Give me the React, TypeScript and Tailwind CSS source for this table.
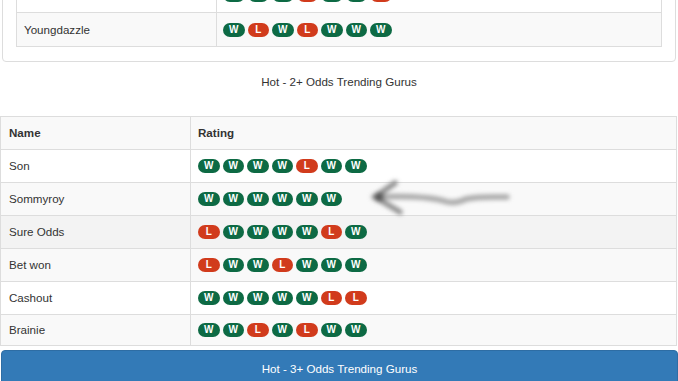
import React from 'react';

type Result = 'W' | 'L';

const font = { fontFamily: '"Liberation Sans", Arial, sans-serif' };

function Badge({ r }: { r: Result }) {
    return (
        <span
            className={`inline-flex items-center justify-center w-[21.5px] h-[14px] rounded-full text-white text-[10px] font-bold leading-none ${r === 'W' ? 'bg-[#0d6a44]' : 'bg-[#d13b1c]'}`}
        >
            {r}
        </span>
    );
}

function Badges({ s }: { s: string }) {
    return (
        <div className="flex items-center gap-[3px]">
            {s.split('').map((c, i) => (
                <Badge key={i} r={c as Result} />
            ))}
        </div>
    );
}

const gurus: { name: string; rating: string; h: string; bg: string }[] = [
    { name: 'Son', rating: 'WWWWLWW', h: 'h-[33px]', bg: 'bg-white' },
    { name: 'Sommyroy', rating: 'WWWWWW', h: 'h-[33px]', bg: 'bg-[#f9f9f9]' },
    { name: 'Sure Odds', rating: 'LWWWWLW', h: 'h-[33px]', bg: 'bg-[#f3f3f3]' },
    { name: 'Bet won', rating: 'LWWLWWW', h: 'h-[33px]', bg: 'bg-[#f9f9f9]' },
    { name: 'Cashout', rating: 'WWWWWLL', h: 'h-[33px]', bg: 'bg-white' },
    { name: 'Brainie', rating: 'WWLWLWW', h: 'h-[31px]', bg: 'bg-[#f9f9f9]' },
];

function Arrow() {
    return (
        <svg className="absolute left-[360px] top-[170px]" width="160" height="50" viewBox="0 0 160 50">
            <defs>
                <filter id="smudge" x="-10%" y="-30%" width="120%" height="160%">
                    <feGaussianBlur stdDeviation="2" />
                </filter>
            </defs>
            <g filter="url(#smudge)" fill="none" strokeLinecap="round" strokeLinejoin="round">
                <path d="M14 27 C 40 26, 70 27, 84 31 C 92 34, 98 33, 106 29 C 118 26, 135 27, 147 27" stroke="#a8a8a8" strokeWidth="5.5" />
                <path d="M35 13 L 15 27 L 40 42" stroke="#8f8f8f" strokeWidth="5.5" />
                <circle cx="19" cy="27" r="5" fill="#5a5a5a" />
            </g>
        </svg>
    );
}

export default function App() {
    return (
        <div className="relative w-[678px] h-[381px] overflow-hidden bg-white text-[#333] text-[11.6px]" style={font}>
            {/* top panel, scrolled so only its last rows show */}
            <div className="mx-[2px] -mt-[24px] border border-[#ddd] rounded-b-[4px] px-[13px] pb-[14px]">
                <div className="border border-[#ddd]">
                    <div className="flex h-[34px] bg-white">
                        <div className="w-[200px] border-r border-[#ddd] pl-[7px] flex items-center">Emmanuelson</div>
                        <div className="flex-1 pl-[6px] flex items-center">
                            <Badges s="WWWLWWL" />
                        </div>
                    </div>
                    <div className="flex h-[34px] bg-[#f9f9f9] border-t border-[#ddd]">
                        <div className="w-[200px] border-r border-[#ddd] pl-[7px] flex items-center">Youngdazzle</div>
                        <div className="flex-1 pl-[6px] flex items-center">
                            <Badges s="WLWLWWW" />
                        </div>
                    </div>
                </div>
            </div>

            <div className="h-[54px] pt-[12px] text-center leading-[16px]">Hot - 2+ Odds Trending Gurus</div>

            <div className="w-[677px] border border-[#ddd]">
                <div className="flex h-[32px] bg-[#f9f9f9] font-bold">
                    <div className="w-[190px] border-r border-[#ddd] pl-[8px] flex items-center">Name</div>
                    <div className="flex-1 pl-[7px] flex items-center">Rating</div>
                </div>
                {gurus.map((g) => (
                    <div key={g.name} className={`flex border-t border-[#ddd] ${g.h} ${g.bg}`}>
                        <div className="w-[190px] border-r border-[#ddd] pl-[8px] flex items-center">{g.name}</div>
                        <div className="flex-1 pl-[7px] flex items-center">
                            <Badges s={g.rating} />
                        </div>
                    </div>
                ))}
            </div>

            <div className="mt-[4px] ml-[1px] h-[36px] rounded-t-[4px] bg-[#337ab7] border border-[#2e6da4] text-white flex items-start justify-center pt-[10px] leading-[16px]">
                Hot - 3+ Odds Trending Gurus
            </div>

            <Arrow />
        </div>
    );
}
